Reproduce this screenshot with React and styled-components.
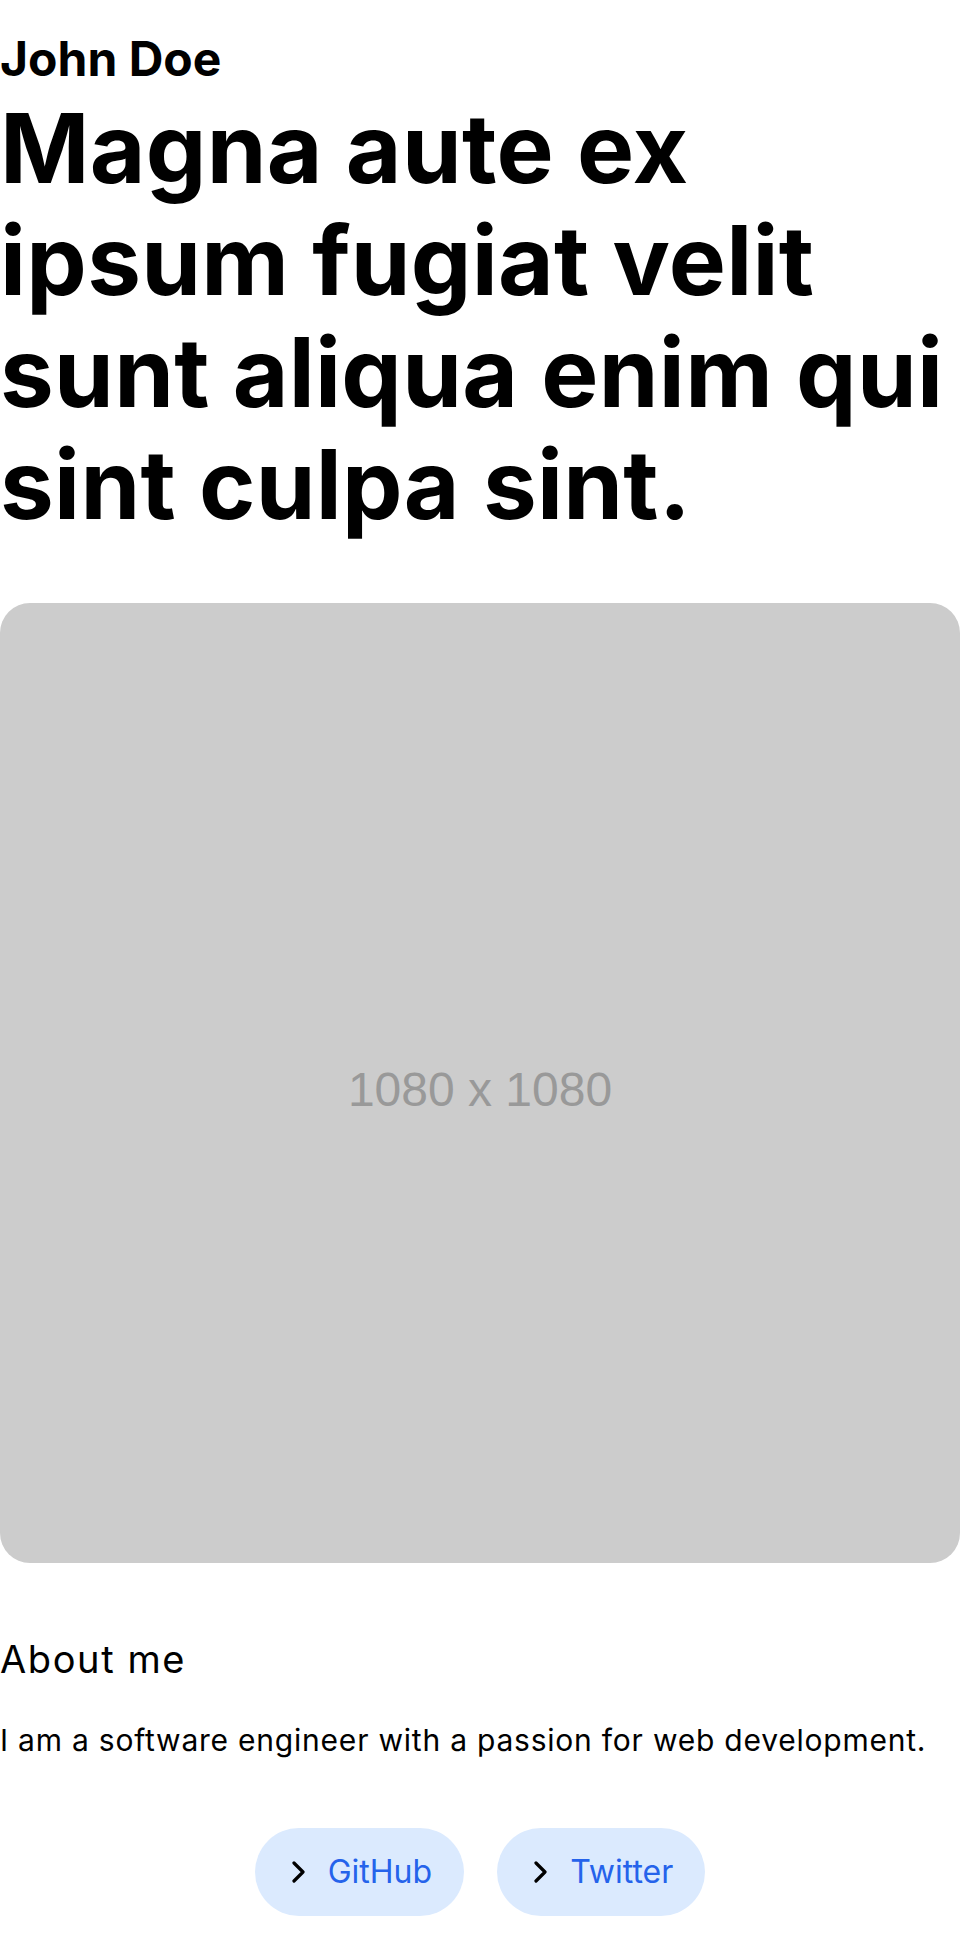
import React from "react";
import styled, { createGlobalStyle } from "styled-components";

const GlobalStyle = createGlobalStyle`
  body {
    margin: 0;
    background: #fff;
    color: #000;
    font-family: Inter, "Noto Sans", sans-serif;
  }
`;

const Page = styled.main`
  display: flex;
  flex-direction: column;
  padding: 35px 0 32px;
`;

const Name = styled.h2`
  margin: 0;
  font-size: 48px;
  line-height: 1;
  font-weight: 700;
`;

const Headline = styled.h1`
  margin: 9px 0 0;
  font-size: 96px;
  line-height: 112px;
  font-weight: 700;
  letter-spacing: 0.3px;
`;

const Placeholder = styled.div`
  margin-top: 63px;
  height: 960px;
  padding-top: 12px;
  box-sizing: border-box;
  border-radius: 30px;
  background: #cccccc;
  display: flex;
  align-items: center;
  justify-content: center;
  color: #999999;
  font-family: "Liberation Sans", Arial, sans-serif;
  font-size: 48px;
`;

const SectionTitle = styled.h3`
  margin: 74px 0 0;
  font-size: 38px;
  line-height: 1.2;
  font-weight: 400;
  letter-spacing: 1.6px;
`;

const Bio = styled.p`
  margin: 35px 0 0;
  font-size: 30px;
  line-height: 1.5;
  letter-spacing: 0.78px;
`;

const Links = styled.nav`
  display: flex;
  justify-content: center;
  gap: 33px;
  margin-top: 65px;
`;

const LinkButton = styled.a`
  display: inline-flex;
  align-items: center;
  gap: 23px;
  height: 88px;
  padding: 0 32px 0 37px;
  border-radius: 44px;
  background: #dbeafe;
  color: #2563eb;
  font-size: 32px;
  text-decoration: none;
`;

const Chevron = () => (
  <svg width="13" height="22" viewBox="0 0 13 22" fill="none">
    <polyline
      points="2,2 11,11 2,20"
      stroke="#000"
      strokeWidth="3.2"
      strokeLinecap="round"
      strokeLinejoin="round"
    />
  </svg>
);

const links = [
  { label: "GitHub", href: "#" },
  { label: "Twitter", href: "#" },
];

export default function App() {
  return (
    <>
      <GlobalStyle />
      <Page>
        <Name>John Doe</Name>
        <Headline>Magna aute ex ipsum fugiat velit sunt aliqua enim qui sint culpa sint.</Headline>
        <Placeholder>1080 x 1080</Placeholder>
        <SectionTitle>About me</SectionTitle>
        <Bio>I am a software engineer with a passion for web development.</Bio>
        <Links>
          {links.map((l) => (
            <LinkButton key={l.label} href={l.href}>
              <Chevron />
              {l.label}
            </LinkButton>
          ))}
        </Links>
      </Page>
    </>
  );
}
